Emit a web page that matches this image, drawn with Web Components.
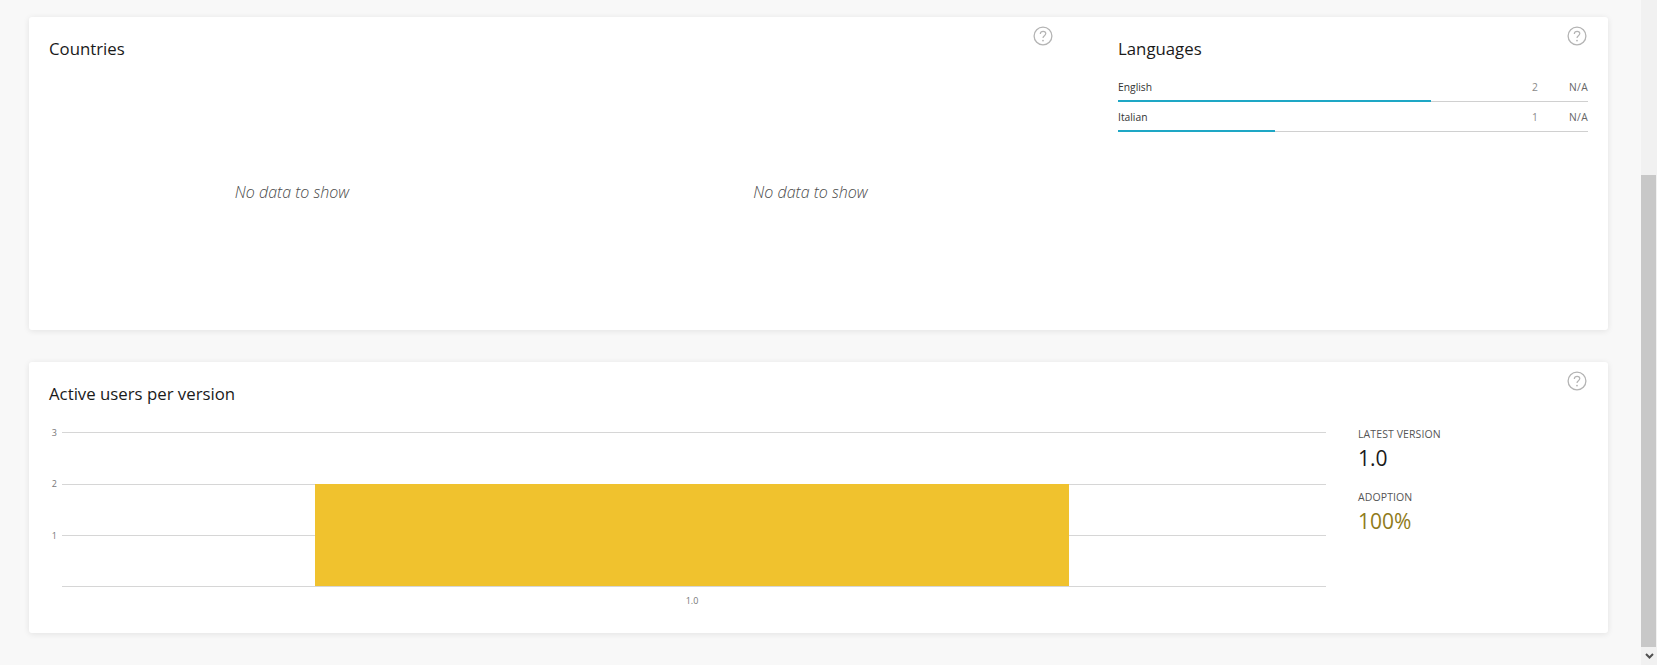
<!DOCTYPE html>
<html lang="en">
<head>
<meta charset="utf-8">
<title>Analytics</title>
<style>
  html, body { margin: 0; height: 665px; overflow: hidden; background: #f8f8f8; }
  body { display: flex; font-family: "Open Sans", "Noto Sans", sans-serif; color: #1a1a1a; }
  main { flex: 1; min-width: 0; padding: 17px 33px 0 29px; display: flex; flex-direction: column; gap: 32px; }
</style>
</head>
<body>
<main>
  <app-card style="height:313px">
    <div class="geo" style="display:grid;grid-template-columns:486px 485px 1fr;column-gap:34px">
      <stat-panel heading="Countries"><empty-note>No data to show</empty-note></stat-panel>
      <stat-panel help><empty-note style="padding-right:2px">No data to show</empty-note></stat-panel>
      <stat-panel heading="Languages" help style="padding-left:30px">
        <lang-row name="English" count="2" pct="66.67"></lang-row>
        <lang-row name="Italian" count="1" pct="33.33"></lang-row>
      </stat-panel>
    </div>
  </app-card>
  <app-card style="height:271px">
    <stat-panel heading="Active users per version" help>
      <div style="display:flex;margin-left:-20px">
        <version-chart></version-chart>
        <version-stats></version-stats>
      </div>
    </stat-panel>
  </app-card>
</main>
<page-scrollbar></page-scrollbar>

<script>
class AppCard extends HTMLElement {
  constructor() {
    super();
    this.attachShadow({ mode: "open" }).innerHTML = `
      <style>
        :host {
          display: block;
          box-sizing: border-box;
          padding: 9px 20px 0;
          background: #fff;
          border-radius: 3px;
          box-shadow: 0 1px 6px rgba(0, 0, 0, 0.09);
        }
      </style>
      <slot></slot>`;
  }
}

class HelpIcon extends HTMLElement {
  constructor() {
    super();
    this.attachShadow({ mode: "open" }).innerHTML = `
      <style>
        :host { display: block; width: 20px; height: 20px; flex: none; }
        svg { display: block; }
      </style>
      <svg width="20" height="20" viewBox="0 0 20 20" fill="none" stroke="#b4b4b4">
        <circle cx="10" cy="10" r="8.9" stroke-width="1.3"/>
        <path d="M7.3 7.9c0-1.6 1.2-2.600 2.800-2.600s2.700 1 2.700 2.300c0 2.200-2.800 2.200-2.800 4.500" stroke-width="1.2"/>
        <circle cx="10" cy="14.600" r=".9" fill="#b4b4b4" stroke="none"/>
      </svg>`;
  }
}

class StatPanel extends HTMLElement {
  connectedCallback() {
    const heading = this.getAttribute("heading") || "";
    this.attachShadow({ mode: "open" }).innerHTML = `
      <style>
        :host { display: block; }
        header { display: flex; justify-content: space-between; align-items: flex-start; height: 47px; }
        h2 { margin: 11px 0 0; font-size: 16.8px; line-height: 24px; font-weight: 400; color: #1a1a1a; }
        help-icon { margin-right: 1px; }
      </style>
      <header>
        <h2>${heading}</h2>
        ${this.hasAttribute("help") ? "<help-icon></help-icon>" : ""}
      </header>
      <slot></slot>`;
  }
}

class EmptyNote extends HTMLElement {
  constructor() {
    super();
    this.attachShadow({ mode: "open" }).innerHTML = `
      <style>
        :host {
          display: block;
          margin-top: 109px;
          text-align: center;
          font-size: 16px;
          line-height: 20px;
          font-style: italic;
          font-weight: 300;
          color: #4a4a4a;
        }
      </style>
      <slot></slot>`;
  }
}

class LangRow extends HTMLElement {
  connectedCallback() {
    const name = this.getAttribute("name");
    const count = this.getAttribute("count");
    const pct = this.getAttribute("pct");
    this.attachShadow({ mode: "open" }).innerHTML = `
      <style>
        :host {
          display: block;
          height: 30px;
          font-size: 10.300px;
        }
        .row { display: flex; height: 28px; align-items: center; }
        .name { flex: 1; color: #333; }
        .count { color: #8a8a8a; }
        .share { width: 50px; text-align: right; color: #666; letter-spacing: .3px; }
        .track { height: 1px; background: #d0d0d0; position: relative; }
        .fill { position: absolute; left: 0; top: -1px; height: 2px; background: #1ea7c5; }
      </style>
      <div class="row">
        <span class="name">${name}</span>
        <span class="count">${count}</span>
        <span class="share">N/A</span>
      </div>
      <div class="track"><div class="fill" style="width:${pct}%"></div></div>`;
  }
}

class VersionChart extends HTMLElement {
  constructor() {
    super();
    this.attachShadow({ mode: "open" }).innerHTML = `
      <style>
        :host { display: block; width: 1297px; height: 190px; flex: none; margin-top: 4px; }
        svg { display: block; }
        text { font-size: 9px; fill: #777; font-family: "Open Sans", sans-serif; }
        line { stroke: #d6d6d6; stroke-width: 1; }
      </style>
      <svg width="1297" height="190" viewBox="0 0 1297 190">
        <line x1="33" x2="1297" y1="10.5" y2="10.5"/>
        <line x1="33" x2="1297" y1="62.5" y2="62.5"/>
        <line x1="33" x2="1297" y1="113.5" y2="113.5"/>
        <line x1="33" x2="1297" y1="164.5" y2="164.5"/>
        <text x="28" y="14" text-anchor="end">3</text>
        <text x="28" y="65" text-anchor="end">2</text>
        <text x="28" y="117" text-anchor="end">1</text>
        <rect x="286" y="62" width="754" height="102" fill="#f0c22e"/>
        <text x="663" y="182" text-anchor="middle">1.0</text>
      </svg>`;
  }
}

class VersionStats extends HTMLElement {
  constructor() {
    super();
    this.attachShadow({ mode: "open" }).innerHTML = `
      <style>
        :host { display: block; margin-left: 32px; padding-top: 8px; }
        .label { font-size: 10.500px; line-height: 16px; color: #555; text-transform: uppercase; letter-spacing: .1px; }
        .value { font-size: 21px; line-height: 30px; color: #1a1a1a; margin: 1px 0 16px; }
        .gold { color: #8f7b1a; }
      </style>
      <div class="label">Latest version</div>
      <div class="value">1.0</div>
      <div class="label">Adoption</div>
      <div class="value gold">100%</div>`;
  }
}

class PageScrollbar extends HTMLElement {
  constructor() {
    super();
    this.attachShadow({ mode: "open" }).innerHTML = `
      <style>
        :host {
          display: flex;
          flex-direction: column;
          width: 16px;
          height: 665px;
          flex: none;
          box-sizing: border-box;
          padding-top: 175px;
          background: #f1f1f1;
        }
        .thumb { flex: 1; width: 15px; background: #c8c8c8; }
        .down { height: 18px; display: flex; align-items: center; justify-content: center; background: #f1f1f1; }
        svg { display: block; }
      </style>
      <div class="thumb"></div>
      <div class="down">
        <svg width="9" height="6" viewBox="0 0 9 6" fill="none" stroke="#505050" stroke-width="2">
          <path d="M1 1l3.500 3.500L8 1"/>
        </svg>
      </div>`;
  }
}

customElements.define("app-card", AppCard);
customElements.define("help-icon", HelpIcon);
customElements.define("stat-panel", StatPanel);
customElements.define("empty-note", EmptyNote);
customElements.define("lang-row", LangRow);
customElements.define("version-chart", VersionChart);
customElements.define("version-stats", VersionStats);
customElements.define("page-scrollbar", PageScrollbar);
</script>
</body>
</html>
